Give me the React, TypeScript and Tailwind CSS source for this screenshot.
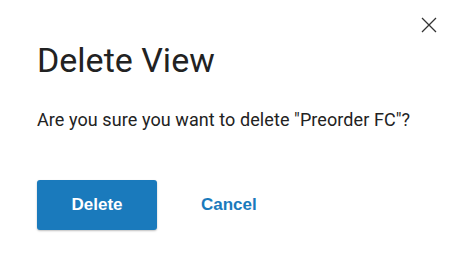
export default function App() {
  return (
    <div className="relative w-[462px] h-[264px] bg-white font-['Roboto',sans-serif] text-[#222222]">
      {/* close */}
      <button className="absolute top-[14px] right-[22px] p-[3px] text-[#333333]">
        <svg width="16" height="16" viewBox="0 0 16 16" fill="none">
          <path d="M1 1L15 15M15 1L1 15" stroke="currentColor" strokeWidth="1.3" />
        </svg>
      </button>

      <div className="flex flex-col pl-[37px] pt-[40px]">
        <h1 className="text-[34px] leading-[40px] font-normal">Delete View</h1>
        <p className="mt-[26px] text-[18px] leading-[28px] tracking-[0.08px]">
          Are you sure you want to delete "Preorder FC"?
        </p>
        <div className="mt-[46px] flex items-center font-['Liberation_Sans',Arial,sans-serif] font-bold text-[17px]">
          <button className="w-[120px] h-[50px] rounded-[3px] bg-[#1a7abc] text-white shadow-[0_1px_2px_rgba(0,0,0,0.25)]">
            Delete
          </button>
          <button className="ml-[44px] text-[#1a7abc]">Cancel</button>
        </div>
      </div>
    </div>
  );
}
